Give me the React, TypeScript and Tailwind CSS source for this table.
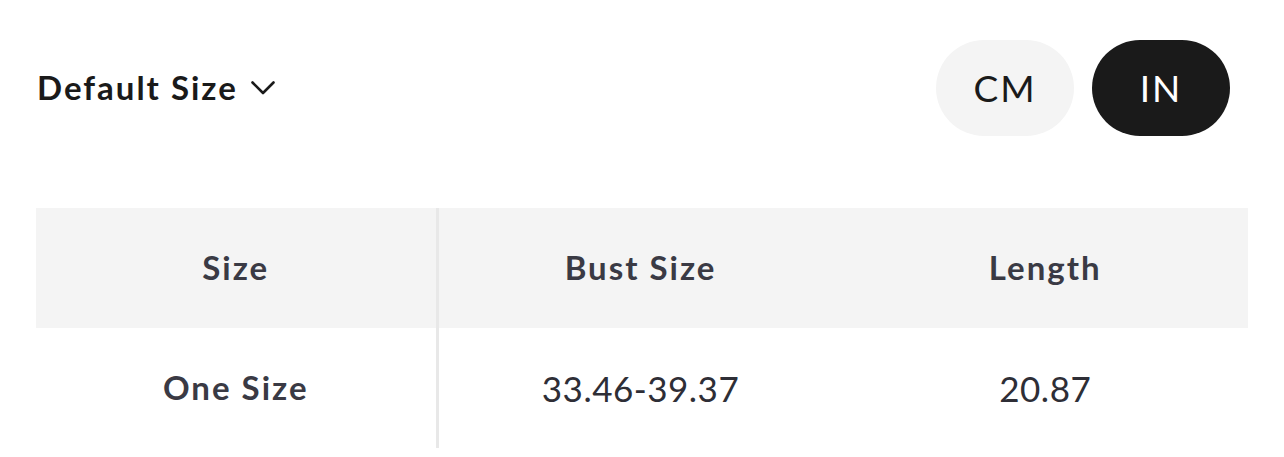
import React from "react";

const rows = [{ size: "One Size", bust: "33.46-39.37", length: "20.87" }];

export default function App() {
  return (
    <div
      className="w-[1284px] h-[457px] bg-white px-[36px] pt-[40px]"
      style={{ fontFamily: "Lato, 'Open Sans', sans-serif" }}
    >
      <div className="flex items-center justify-between h-[96px]">
        <button className="flex items-center gap-[13px] pl-[1px] text-[33px] tracking-[2px] font-bold text-[#1a1a1a]">
          Default Size
          <svg width="24" height="16" viewBox="0 0 24 16" fill="none">
            <path d="M1.5 2.5 L12 13 L22.5 2.5" stroke="#1a1a1a" strokeWidth="2.6" strokeLinecap="round" strokeLinejoin="round" />
          </svg>
        </button>
        <div className="flex items-center gap-[18px] pr-[18px]">
          <button className="w-[138px] h-[96px] rounded-full bg-[#f4f4f4] text-[37px] tracking-[2px] text-[#1a1a1a]">
            CM
          </button>
          <button className="w-[138px] h-[96px] rounded-full bg-[#1a1a1a] text-[37px] tracking-[2px] text-white">
            IN
          </button>
        </div>
      </div>

      <table className="mt-[72px] w-[1212px] table-fixed border-collapse">
        <thead>
          <tr className="bg-[#f4f4f4] h-[120px]">
            <th className="w-[401px] border-r-[3px] border-[#e8e8e8] text-[33px] tracking-[2px] font-bold text-[#3a3a44]">Size</th>
            <th className="text-[33px] tracking-[2px] font-bold text-[#3a3a44]">Bust Size</th>
            <th className="text-[33px] tracking-[2px] font-bold text-[#3a3a44]">Length</th>
          </tr>
        </thead>
        <tbody>
          {rows.map((r) => (
            <tr key={r.size} className="h-[120px]">
              <td className="border-r-[3px] border-[#e8e8e8] text-center text-[33px] tracking-[2px] font-bold text-[#3a3a44]">{r.size}</td>
              <td className="text-center text-[35px] tracking-[0.5px] text-[#2e2e36]">{r.bust}</td>
              <td className="text-center text-[35px] tracking-[0.5px] text-[#2e2e36]">{r.length}</td>
            </tr>
          ))}
        </tbody>
      </table>
    </div>
  );
}
